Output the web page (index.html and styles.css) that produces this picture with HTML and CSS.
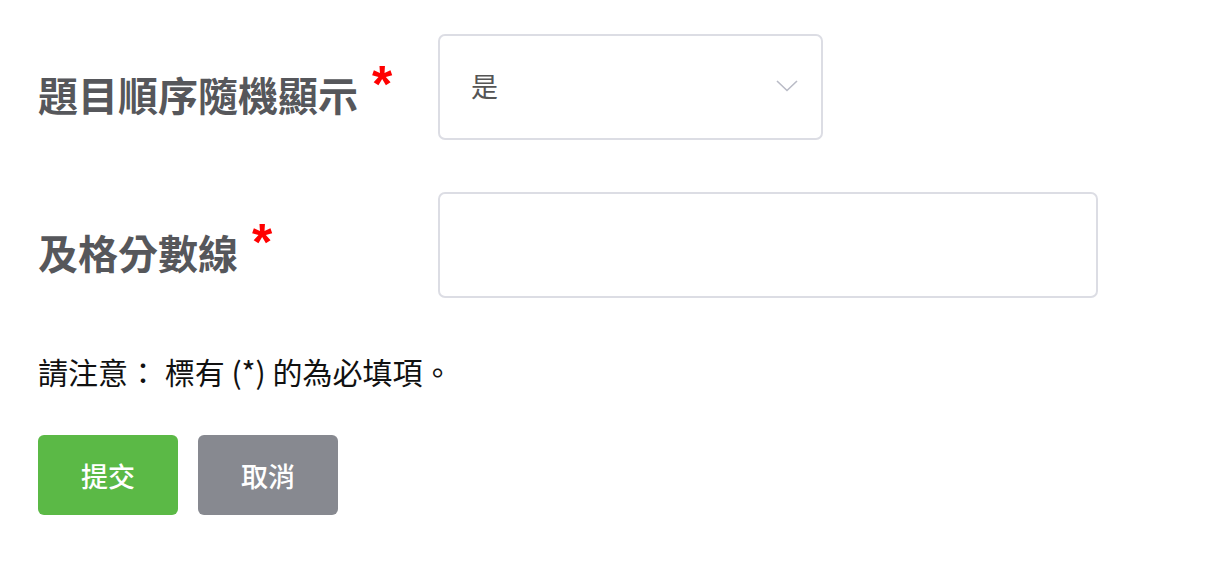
FILE: index.html
```html
<!DOCTYPE html>
<html lang="zh-Hant">
<head>
<meta charset="utf-8">
<title>表單</title>
<link rel="stylesheet" href="styles.css">
</head>
<body>
<form class="form">
  <div class="row">
    <label class="label">題目順序隨機顯示<span class="req">*</span></label>
    <div class="select">
      <span class="select-value">是</span>
      <svg class="chevron" width="22" height="12" viewBox="0 0 22 12"><polyline points="1,1 11,10.5 21,1" fill="none" stroke="#b9bbc6" stroke-width="1.6"/></svg>
    </div>
  </div>
  <div class="row">
    <label class="label">及格分數線<span class="req">*</span></label>
    <div class="input"></div>
  </div>
  <p class="note">請注意： 標有 (*) 的為必填項。</p>
  <div class="actions">
    <button type="button" class="btn btn-submit">提交</button>
    <button type="button" class="btn btn-cancel">取消</button>
  </div>
</form>
</body>
</html>
```

FILE: styles.css
```css
html, body {
  margin: 0;
  background: #ffffff;
}
body {
  font-family: "Noto Sans CJK TC", "Noto Sans", sans-serif;
}
.form {
  padding: 34px 0 0 38px;
}
.row {
  display: flex;
  align-items: flex-start;
}
.row + .row {
  margin-top: 52px;
}
.label {
  flex: none;
  width: 400px;
  padding-top: 30px;
  font-size: 40px;
  line-height: 60px;
  font-weight: 700;
  color: #56575b;
}
.req {
  display: inline-block;
  margin-left: 14px;
  vertical-align: top;
  font-family: "Liberation Sans", sans-serif;
  font-weight: 700;
  font-size: 52px;
  line-height: 40px;
  color: #ff0000;
}
.select,
.input {
  box-sizing: border-box;
  height: 106px;
  border: 2px solid #dcdde4;
  border-radius: 7px;
  background: #fff;
}
.select {
  width: 385px;
  display: flex;
  align-items: center;
  justify-content: space-between;
  padding: 0 23px 4px 31px;
}
.select-value {
  font-size: 27px;
  color: #555;
}
.chevron {
  display: block;
  margin-top: 2px;
}
.input {
  width: 660px;
}
.note {
  margin: 52px 0 0;
  font-size: 30px;
  line-height: 43px;
  color: #111;
}
.actions {
  display: flex;
  gap: 20px;
  margin-top: 42px;
}
.btn {
  width: 140px;
  height: 80px;
  border: 0;
  border-radius: 6px;
  font-family: "Noto Sans CJK TC", sans-serif;
  font-size: 27px;
  font-weight: 500;
  color: #fff;
  cursor: pointer;
}
.btn-submit {
  background: #5bb946;
}
.btn-cancel {
  background: #878990;
}
```
